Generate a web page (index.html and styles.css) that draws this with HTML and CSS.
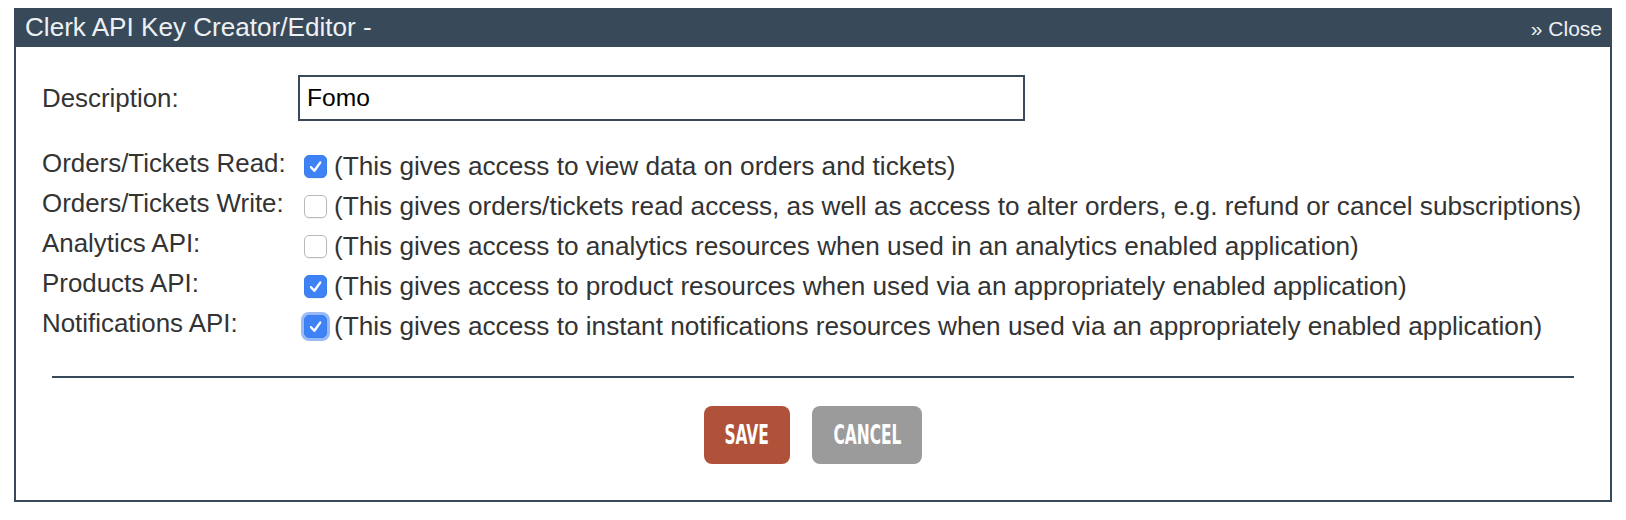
FILE: index.html
```html
<!DOCTYPE html>
<html lang="en">
<head>
  <meta charset="UTF-8" />
  <title>Clerk API Key Creator/Editor</title>
  <link rel="stylesheet" href="styles.css">
</head>
<body>

  <div class="dialog">
    <div class="dialog-head">
      <span class="dialog-title">Clerk API Key Creator/Editor -</span>
      <a href="#" class="close-link">&raquo; Close</a>
    </div>

    <div class="dialog-body">
      <div class="form">
        <div class="desc-row">
          <label for="desc">Description:</label>
          <input type="text" id="desc" value="Fomo" />
        </div>

        <div class="perms">
          <div class="perm">
            <span class="perm-label">Orders/Tickets Read:</span>
            <span class="perm-val"><span class="box checked"></span>(This gives access to view data on orders and tickets)</span>
          </div>
          <div class="perm">
            <span class="perm-label">Orders/Tickets Write:</span>
            <span class="perm-val"><span class="box"></span>(This gives orders/tickets read access, as well as access to alter orders, e.g. refund or cancel subscriptions)</span>
          </div>
          <div class="perm">
            <span class="perm-label">Analytics API:</span>
            <span class="perm-val"><span class="box"></span>(This gives access to analytics resources when used in an analytics enabled application)</span>
          </div>
          <div class="perm">
            <span class="perm-label">Products API:</span>
            <span class="perm-val"><span class="box checked"></span>(This gives access to product resources when used via an appropriately enabled application)</span>
          </div>
          <div class="perm">
            <span class="perm-label">Notifications API:</span>
            <span class="perm-val"><span class="box checked focus"></span>(This gives access to instant notifications resources when used via an appropriately enabled application)</span>
          </div>
        </div>
      </div>

      <hr class="sep">

      <div class="actions">
        <button class="btn btn-save"><span>SAVE</span></button>
        <button class="btn btn-cancel"><span>CANCEL</span></button>
      </div>
    </div>
  </div>

</body>
</html>
```

FILE: styles.css
```css
body {
  margin: 8px 14px;
  font-family: 'Liberation Sans', Arial, sans-serif;
  color: #333;
  background: #fff;
}
.dialog {
  border: 2px solid #384a5a;
  border-top: none;
}
.dialog-head {
  display: flex;
  justify-content: space-between;
  align-items: baseline;
  background: #384a5a;
  color: #eef1f3;
  height: 39px;
  line-height: 38px;
  padding: 0 8px 0 9px;
}
.dialog-title {
  font-size: 26.1px;
}
.close-link {
  font-size: 21px;
  color: #eef1f3;
  text-decoration: none;
}
.dialog-body {
  padding: 28px 0 36px;
}
.form {
  padding: 0 26px;
  font-size: 25.9px;
}
.desc-row {
  display: grid;
  grid-template-columns: 256px 727px;
  align-items: center;
}
.desc-row input {
  height: 46px;
  box-sizing: border-box;
  border: 2px solid #384a5a;
  padding: 0 7px;
  font-family: 'Liberation Sans', Arial, sans-serif;
  font-size: 24.6px;
  color: #000;
  outline: none;
}
.perms {
  margin-top: 25px;
}
.perm {
  display: grid;
  grid-template-columns: 256px 1fr;
  align-items: start;
  height: 40px;
}
.perm-label {
  line-height: 34px;
  white-space: nowrap;
}
.perm-val {
  display: flex;
  align-items: center;
  line-height: 40px;
  font-size: 26.2px;
  white-space: nowrap;
}
.box {
  flex: none;
  width: 21px;
  height: 21px;
  margin: 0 7px 0 6px;
  border: 1px solid #b9b9b9;
  border-radius: 5px;
  background: #fff;
  box-shadow: 0 1px 1px rgba(0,0,0,0.06);
}
.box.checked {
  border-color: #3a7ef0;
  background: #3e82f5 url("data:image/svg+xml,%3Csvg xmlns='http://www.w3.org/2000/svg' width='21' height='21'%3E%3Cpath d='M6 11.2 L9.4 14.8 L15.2 6.6' fill='none' stroke='%23fff' stroke-width='2.4' stroke-linecap='round' stroke-linejoin='round'/%3E%3C/svg%3E") center no-repeat;
}
.box.focus {
  box-shadow: 0 0 0 3px rgba(70,130,240,0.55);
}
.sep {
  margin: 30px 36px 0;
  border: none;
  height: 2px;
  background: #384a5a;
}
.actions {
  display: flex;
  justify-content: center;
  gap: 22px;
  margin-top: 28px;
}
.btn {
  height: 58px;
  border: none;
  border-radius: 8px;
  color: #fff;
  font-family: 'DejaVu Sans Condensed', 'DejaVu Sans', sans-serif;
  font-weight: bold;
  font-size: 26px;
  padding: 0;
  cursor: pointer;
}
.btn span {
  display: inline-block;
  transform: scaleX(0.66);
}
.btn-save {
  width: 86px;
  background: #b0523a;
}
.btn-cancel {
  width: 110px;
  background: #9b9b9b;
}
```
